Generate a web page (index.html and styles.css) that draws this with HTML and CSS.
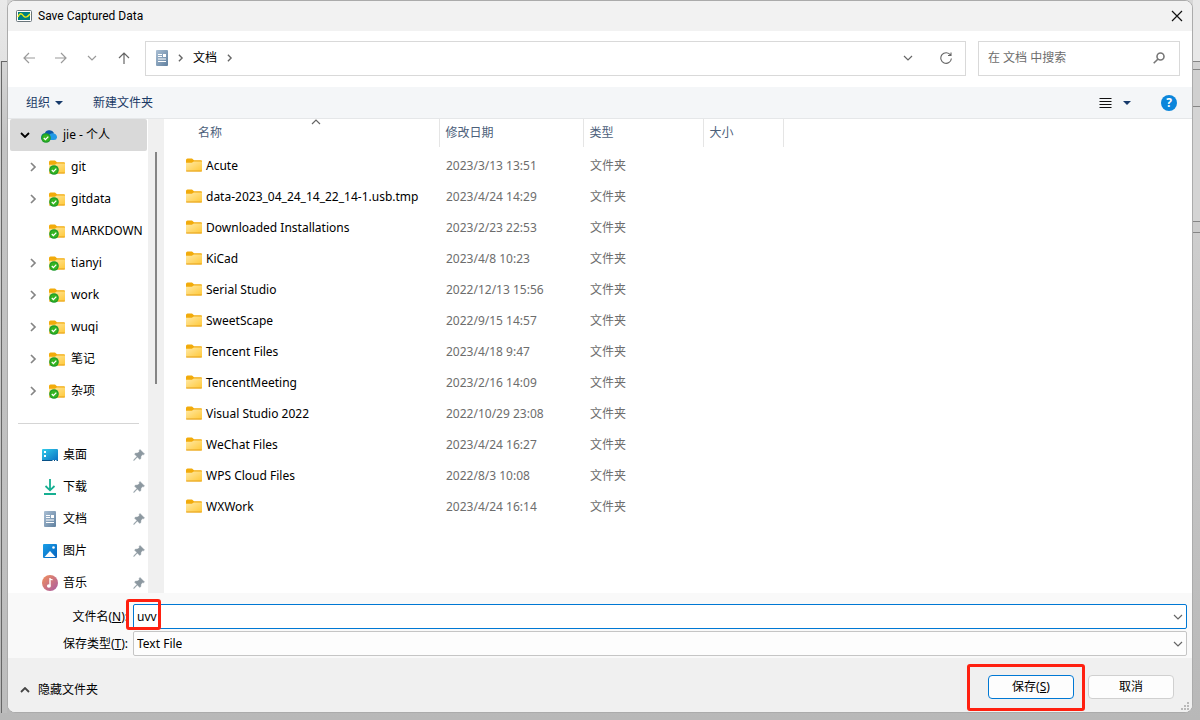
FILE: index.html
```html
<!DOCTYPE html>
<html lang="zh-CN">
<head>
<meta charset="utf-8">
<meta name="viewport" content="width=device-width, initial-scale=1">
<title>Save Captured Data</title>
<link rel="stylesheet" href="styles.css">
</head>
<body>
<svg class="defs" aria-hidden="true">
  <defs>
    <linearGradient id="gold" x1="0" y1="0" x2="1" y2="1"><stop offset="0" stop-color="#ffe9a6"/><stop offset="1" stop-color="#ffc837"/></linearGradient>
    <linearGradient id="slate" x1="0" y1="0" x2="1" y2="1"><stop offset="0" stop-color="#aabfd4"/><stop offset="1" stop-color="#60809f"/></linearGradient>
    <linearGradient id="azure" x1="0" y1="0" x2="1" y2="1"><stop offset="0" stop-color="#31cdea"/><stop offset="1" stop-color="#0b6fc2"/></linearGradient>
    <linearGradient id="blue" x1="0" y1="0" x2="1" y2="1"><stop offset="0" stop-color="#1aa0e8"/><stop offset="1" stop-color="#0762bd"/></linearGradient>
    <linearGradient id="coral" x1="0" y1="0" x2="1" y2="1"><stop offset="0" stop-color="#f2905b"/><stop offset="1" stop-color="#a85aa3"/></linearGradient>
    <symbol id="folder" viewBox="0 0 16 14">
      <path d="M0 2Q0 .5 1.5 .5H6L8 2.3H15Q16 2.3 16 3.5V6H0Z" fill="#f2ab0b"/>
      <path d="M0 4.8H5.8L7.8 3.5H16V12.5Q16 13.5 15 13.5H1Q0 13.5 0 12.5Z" fill="url(#gold)"/>
      <path d="M.2 13H15.8" stroke="#e5a01b"/>
    </symbol>
    <symbol id="check" viewBox="0 0 10 10">
      <circle cx="5" cy="5" r="4.8" fill="#1c9a2b"/><circle cx="5" cy="5" r="3.6" fill="#35b51f"/>
      <path d="M2.8 5L4.4 6.6L7.3 3.6" fill="none" stroke="#fff" stroke-width="1.3"/>
    </symbol>
    <symbol id="synced" viewBox="0 0 16 16">
      <use href="#folder" y="1" width="16" height="14"/><use href="#check" y="6" width="10" height="10"/>
    </symbol>
    <symbol id="cloud" viewBox="0 0 16 16">
      <path d="M3.5 8A5 5 0 0 1 13 6L9 11H2Z" fill="#0c59a8"/>
      <path d="M0 11Q0 6.3 4 6.2Q6 6.2 8 8L13 13H3Q0 13 0 11Z" fill="#1487d4"/>
      <path d="M7 13L6 10Q9 5.5 13 6.5Q16 7.5 16 10.4Q15.6 13 13 13Z" fill="#2299e6"/>
      <use href="#check" y="6" width="10" height="10"/>
    </symbol>
    <symbol id="document" viewBox="0 0 12 16">
      <rect width="12" height="16" rx="1" fill="url(#slate)"/>
      <path d="M2 4.5H6M2 6.5H6M2 9H10M2 11.5H10" stroke="#fff"/><path d="M7 4H10V7H7Z" fill="#fff"/>
    </symbol>
    <symbol id="desktop" viewBox="0 0 16 16">
      <rect y="2" width="16" height="12" rx="1" fill="url(#azure)"/><path d="M0 13.5H16" stroke="#075187"/>
      <path d="M2 4H4V6H2ZM2 8H4V10H2ZM10.5 13H12V14H10.5ZM13 13H14.500V14H13Z" fill="#fff"/>
    </symbol>
    <symbol id="download" viewBox="0 0 16 16">
      <path d="M8 0V11M3.500 7L8 11.300L12.500 7M2 15H14" fill="none" stroke="#16af92" stroke-width="1.8"/>
    </symbol>
    <symbol id="picture" viewBox="0 0 16 16">
      <rect x="1" y="1" width="14" height="14" rx="1" fill="url(#blue)"/><path d="M2.500 14L8 8L13.500 14Z" fill="#fff"/><circle cx="11.500" cy="4.500" r="1.300" fill="#fff"/>
    </symbol>
    <symbol id="music" viewBox="0 0 16 16">
      <circle cx="8" cy="8" r="8" fill="url(#coral)"/><path d="M8 3V10.500M8 3.600L10.500 5" stroke="#fff" stroke-width="1.400"/><ellipse cx="6.900" cy="11" rx="2" ry="1.800" fill="#fff"/>
    </symbol>
    <symbol id="pin" viewBox="0 0 12 12">
      <path d="M7 .500L11.500 5L10.300 5.800L9.500 5.600L8 7.300L7.700 9.800L6.700 10.300L4.300 8L1 11.500L.500 11L4 7.600L1.700 5.200L2.200 4.300L4.800 4L6.400 2.400L6.200 1.500Z" fill="#8c98a0" stroke="#8c98a0" stroke-width=".5"/>
    </symbol>
    <symbol id="right" viewBox="0 0 8 10"><path d="M2 1L6 5L2 9" fill="none" stroke="currentColor" stroke-width="1.700"/></symbol>
    <symbol id="down" viewBox="0 0 10 6"><path d="M1 1L5 5L9 1" fill="none" stroke="currentColor" stroke-width="1.200"/></symbol>
    <symbol id="down-bold" viewBox="0 0 10 6"><path d="M1 1L5 5L9 1" fill="none" stroke="currentColor" stroke-width="1.800"/></symbol>
    <symbol id="up" viewBox="0 0 10 6"><path d="M1 5L5 1L9 5" fill="none" stroke="currentColor" stroke-width="1.200"/></symbol>
    <symbol id="up-bold" viewBox="0 0 10 6"><path d="M1 5L5 1L9 5" fill="none" stroke="currentColor" stroke-width="1.800"/></symbol>
    <symbol id="caret" viewBox="0 0 8 4"><path d="M0 0H8L4 4Z" fill="#173a6b"/></symbol>
    <symbol id="arrow" viewBox="0 0 12 12"><path d="M12 6H1M6 1L1 6L6 11" fill="none" stroke="currentColor" stroke-width="1.200"/></symbol>
  </defs>
</svg>
<div class="desktop">
  <div class="gutter gutter-left"><div class="behind-left"></div></div>
  <main class="dialog">
    <header class="titlebar">
      <svg class="i16" viewBox="0 0 16 16"><rect x=".5" y="2.5" width="15" height="11" rx="1" fill="#fff" stroke="#69747a"/><rect x="2" y="4" width="12" height="8" fill="#007f80"/><path d="M2 9Q4.500 3 7.500 8Q10 11 14 6" fill="none" stroke="#f4ee12" stroke-width="1.300"/></svg>
      <h1>Save Captured Data</h1>
      <button class="icon-button close" aria-label="关闭"><svg viewBox="0 0 12 12" class="i12"><path d="M1 1L11 11M11 1L1 11" stroke="#111" stroke-width="1.200"/></svg></button>
    </header>
    <nav class="navbar">
      <div class="history">
        <button class="icon-button" aria-label="后退"><svg class="i12"><use href="#arrow"/></svg></button>
        <button class="icon-button" aria-label="前进"><svg class="i12 flip"><use href="#arrow"/></svg></button>
        <button class="icon-button" aria-label="最近位置"><svg class="chev"><use href="#down"/></svg></button>
        <button class="icon-button strong" aria-label="上移"><svg class="i12 turn"><use href="#arrow"/></svg></button>
      </div>
      <div class="address">
        <svg class="doc"><use href="#document"/></svg>
        <svg class="crumb"><use href="#right"/></svg>
        <a href="#docs">文档</a>
        <svg class="crumb"><use href="#right"/></svg>
        <button class="icon-button address-drop" aria-label="以前的位置"><svg class="chev"><use href="#down"/></svg></button>
        <button class="icon-button" aria-label="刷新"><svg class="i12" viewBox="0 0 12 12"><path d="M10.500 3A5.300 5.300 0 1 0 11.400 6.500M11 .500V3.500H8" fill="none" stroke="currentColor" stroke-width="1.100"/></svg></button>
      </div>
      <label class="search">
        <input type="text" placeholder="在 文档 中搜索" aria-label="在 文档 中搜索">
        <svg class="i12" viewBox="0 0 12 12"><circle cx="7.500" cy="4.500" r="3.500" fill="none" stroke="#777" stroke-width="1.600"/><path d="M5 7L.700 11.300" stroke="#777" stroke-width="1.600"/></svg>
      </label>
    </nav>
    <div class="toolbar">
      <button class="tool">组织 <svg class="caret"><use href="#caret"/></svg></button>
      <button class="tool">新建文件夹</button>
      <button class="tool view" aria-label="更改视图"><svg class="lines" viewBox="0 0 12 12"><path d="M0 1.500H12M0 4.500H12M0 7.500H12M0 10.500H12" stroke="#111"/></svg><svg class="caret"><use href="#caret"/></svg></button>
      <button class="help" aria-label="帮助">?</button>
    </div>
    <div class="browser">
      <aside class="sidebar">
        <ul class="tree">
          <li class="root"><svg class="chev"><use href="#down-bold"/></svg><svg class="i16"><use href="#cloud"/></svg><span>jie - 个人</span></li>
          <li><svg class="crumb"><use href="#right"/></svg><svg class="i16"><use href="#synced"/></svg><span>git</span></li>
          <li><svg class="crumb"><use href="#right"/></svg><svg class="i16"><use href="#synced"/></svg><span>gitdata</span></li>
          <li><svg class="crumb"></svg><svg class="i16"><use href="#synced"/></svg><span>MARKDOWN</span></li>
          <li><svg class="crumb"><use href="#right"/></svg><svg class="i16"><use href="#synced"/></svg><span>tianyi</span></li>
          <li><svg class="crumb"><use href="#right"/></svg><svg class="i16"><use href="#synced"/></svg><span>work</span></li>
          <li><svg class="crumb"><use href="#right"/></svg><svg class="i16"><use href="#synced"/></svg><span>wuqi</span></li>
          <li><svg class="crumb"><use href="#right"/></svg><svg class="i16"><use href="#synced"/></svg><span>笔记</span></li>
          <li><svg class="crumb"><use href="#right"/></svg><svg class="i16"><use href="#synced"/></svg><span>杂项</span></li>
        </ul>
        <hr>
        <ul class="quick">
          <li><svg class="i16"><use href="#desktop"/></svg><span>桌面</span><svg class="i12"><use href="#pin"/></svg></li>
          <li><svg class="i16"><use href="#download"/></svg><span>下载</span><svg class="i12"><use href="#pin"/></svg></li>
          <li><svg class="i16"><use href="#document"/></svg><span>文档</span><svg class="i12"><use href="#pin"/></svg></li>
          <li><svg class="i16"><use href="#picture"/></svg><span>图片</span><svg class="i12"><use href="#pin"/></svg></li>
          <li><svg class="i16"><use href="#music"/></svg><span>音乐</span><svg class="i12"><use href="#pin"/></svg></li>
        </ul>
      </aside>
      <div class="scrollbar"><div class="thumb"></div></div>
      <section class="files">
        <table>
          <colgroup><col class="c-name"><col class="c-date"><col class="c-type"><col class="c-size"><col></colgroup>
          <thead><tr><th>名称<svg class="chev sort"><use href="#up"/></svg></th><th>修改日期</th><th>类型</th><th>大小</th><th></th></tr></thead>
          <tbody>
            <tr><td><svg class="folder"><use href="#folder"/></svg>Acute</td><td>2023/3/13 13:51</td><td>文件夹</td><td></td><td></td></tr>
            <tr><td><svg class="folder"><use href="#folder"/></svg>data-2023_04_24_14_22_14-1.usb.tmp</td><td>2023/4/24 14:29</td><td>文件夹</td><td></td><td></td></tr>
            <tr><td><svg class="folder"><use href="#folder"/></svg>Downloaded Installations</td><td>2023/2/23 22:53</td><td>文件夹</td><td></td><td></td></tr>
            <tr><td><svg class="folder"><use href="#folder"/></svg>KiCad</td><td>2023/4/8 10:23</td><td>文件夹</td><td></td><td></td></tr>
            <tr><td><svg class="folder"><use href="#folder"/></svg>Serial Studio</td><td>2022/12/13 15:56</td><td>文件夹</td><td></td><td></td></tr>
            <tr><td><svg class="folder"><use href="#folder"/></svg>SweetScape</td><td>2022/9/15 14:57</td><td>文件夹</td><td></td><td></td></tr>
            <tr><td><svg class="folder"><use href="#folder"/></svg>Tencent Files</td><td>2023/4/18 9:47</td><td>文件夹</td><td></td><td></td></tr>
            <tr><td><svg class="folder"><use href="#folder"/></svg>TencentMeeting</td><td>2023/2/16 14:09</td><td>文件夹</td><td></td><td></td></tr>
            <tr><td><svg class="folder"><use href="#folder"/></svg>Visual Studio 2022</td><td>2022/10/29 23:08</td><td>文件夹</td><td></td><td></td></tr>
            <tr><td><svg class="folder"><use href="#folder"/></svg>WeChat Files</td><td>2023/4/24 16:27</td><td>文件夹</td><td></td><td></td></tr>
            <tr><td><svg class="folder"><use href="#folder"/></svg>WPS Cloud Files</td><td>2022/8/3 10:08</td><td>文件夹</td><td></td><td></td></tr>
            <tr><td><svg class="folder"><use href="#folder"/></svg>WXWork</td><td>2023/4/24 16:14</td><td>文件夹</td><td></td><td></td></tr>
          </tbody>
        </table>
      </section>
    </div>
    <div class="fields">
      <label for="filename">文件名(<u>N</u>):</label>
      <div class="combo active"><input id="filename" type="text" value="uvv"><svg class="chev"><use href="#down"/></svg><span class="mark mark-name"></span></div>
      <label for="filetype">保存类型(<u>T</u>):</label>
      <div class="combo"><select id="filetype"><option>Text File</option></select><svg class="chev"><use href="#down"/></svg></div>
    </div>
    <footer class="footer">
      <button class="toggle"><svg class="chev"><use href="#up-bold"/></svg>隐藏文件夹</button>
      <div class="save-wrap"><button class="btn primary">保存(<u>S</u>)</button><span class="mark mark-save"></span></div>
      <button class="btn">取消</button>
      <svg class="grip" viewBox="0 0 8 8"><path d="M6 0H8V2H6ZM3 3H5V5H3ZM6 3H8V5H6ZM0 6H2V8H0ZM3 6H5V8H3ZM6 6H8V8H6Z" fill="#b9b9b9"/></svg>
    </footer>
  </main>
  <div class="gutter gutter-right"><div class="strip-a"></div><div class="strip-b"></div><div class="strip-c"></div><div class="strip-d"></div><div class="strip-e"></div></div>
</div>
</body>
</html>
```
FILE: styles.css
```css
* { box-sizing: border-box; }
body {
  margin: 0;
  font: 12px/16px "Noto Sans", "Noto Sans CJK SC", sans-serif;
  color: #000;
}
button, input, select { font: inherit; color: inherit; }
ul { list-style: none; margin: 0; padding: 0; }
svg { display: block; flex: none; }
.defs { position: absolute; width: 0; height: 0; }
.i16 { width: 16px; height: 16px; }
.i12 { width: 12px; height: 12px; }
.chev { width: 10px; height: 6px; }
.crumb { width: 8px; height: 10px; color: #858585; }
.caret { width: 8px; height: 4px; }
.doc { width: 12px; height: 16px; }
.flip { transform: rotate(180deg); }
.turn { transform: rotate(90deg); }

.desktop {
  display: grid;
  grid-template-columns: 7px minmax(0, 1fr) 7px;
  min-height: 100vh;
  padding-bottom: 7px;
  background: linear-gradient(#d8d8d8, #b8b8b8);
}
.gutter { display: flex; flex-direction: column; }
.gutter-left { padding-top: 61px; background: linear-gradient(#e9e9e9 0, #e2e2e2 61px, transparent 61px); }
.behind-left {
  flex: 1;
  margin-left: 1px;
  border-top: 1px solid #666;
  border-left: 1px solid #666;
  background: linear-gradient(#d5d5d5, #c4c4c4 80px, #bdbdbd);
}
.gutter-right > div { border-bottom: 1px solid #858585; }
.strip-a { height: 62px; background: #e8e8e8; }
.strip-b { height: 8px; background: #d2d2d2; }
.strip-c { height: 37px; background: #d0d0d0; }
.strip-d { height: 115px; background: #d4d4d4; }
.strip-e { height: 11px; background: #ccc; }

.dialog {
  display: flex;
  flex-direction: column;
  border: 1px solid #ababab;
  border-radius: 8px;
  overflow: hidden;
  background: #fff;
}
.icon-button {
  display: grid;
  place-items: center;
  width: 24px;
  height: 24px;
  padding: 0;
  border: 0;
  background: none;
}
.titlebar {
  display: flex;
  align-items: center;
  gap: 6px;
  height: 30px;
  padding: 0 3px 0 8px;
  background: #f2f2f2;
}
.titlebar h1 { margin: 0; font-family: Roboto, sans-serif; font-size: 12px; font-weight: 400; }
.close { margin-left: auto; }

.navbar {
  display: grid;
  grid-template-columns: 125px minmax(0, 65fr) minmax(0, 16fr);
  gap: 12px;
  align-items: center;
  height: 56px;
  padding: 0 12px 2px 0;
}
.history { display: flex; justify-content: space-between; padding-left: 9px; padding-right: 0; color: #9a9a9a; }
.history .strong { color: #666; }
.history { margin-right: -3px; }
.address, .search {
  display: flex;
  align-items: center;
  height: 35px;
  border: 1px solid #d9d9d9;
}
.address { gap: 9px; padding: 0 7px 0 10px; color: #666; }
.address .crumb { width: 7px; height: 8px; color: #666; }
.address a { color: #000; text-decoration: none; }
.address-drop { margin-left: auto; margin-right: 5px; }
.search { padding: 0 14px 0 9px; }
.search input { flex: 1; min-width: 0; padding: 0; border: 0; outline: 0; background: none; }
.search input::placeholder { color: #6d6d6d; opacity: 1; }

.toolbar {
  display: flex;
  align-items: center;
  gap: 30px;
  height: 32px;
  padding: 0 15px 0 18px;
  border-bottom: 1px solid #e5e7e9;
  background: #f4f6f8;
  color: #1b3a66;
}
.tool { display: flex; align-items: center; gap: 5px; padding: 0; border: 0; background: none; }
.view { gap: 11px; margin-left: auto; }
.lines { width: 13px; height: 12px; }
.help {
  width: 16px;
  height: 16px;
  padding: 0;
  border: 0;
  border-radius: 50%;
  background: #0c86db;
  color: #fff;
  font-weight: 700;
}

.browser {
  display: grid;
  grid-template-columns: 140px 16px minmax(0, 1fr);
  flex: 1 0 474px;
  height: 474px;
  overflow: hidden;
}
.sidebar { min-height: 0; overflow: hidden; }
.sidebar li { display: flex; align-items: center; height: 32px; white-space: nowrap; }
.tree li { gap: 5px; padding-left: 21px; }
.tree .crumb { margin-right: 7px; }
.tree .i16 { margin-right: 1px; }
.tree .root { gap: 5px; margin: 0 1px 0 2px; padding-left: 10px; border-radius: 2px; background: #d9d9d9; }
.root .chev { margin-right: 6px; }
.sidebar hr { margin: 16px 9px 15px 10px; border: 0; border-top: 1px solid #d5d5d5; }
.quick li { gap: 5px; padding: 0 3px 0 34px; }
.quick .i12 { margin-left: auto; }
.scrollbar { padding: 33px 7px 0; background: #f0f0f0; }
.thumb { height: 232px; background: #858585; }

.files { overflow: auto; }
.files table { width: 100%; border-collapse: collapse; table-layout: fixed; }
.c-name { width: 275px; }
.c-date { width: 144px; }
.c-type { width: 120px; }
.c-size { width: 80px; }
.files th {
  position: relative;
  height: 28px;
  padding: 0 6px;
  border-right: 1px solid #e5e5e5;
  font-weight: 400;
  text-align: left;
  color: #4c607a;
}
.files th:first-child { padding-left: 34px; }
.files th:last-child { border: 0; }
.sort { position: absolute; left: 147px; top: 0; color: #666; }
.files tbody::before { content: ""; display: block; height: 3px; }
.files td { height: 31px; padding: 0 7px; color: #6d6d6d; white-space: nowrap; }
.files td:first-child { padding-left: 22px; color: #000; }
.folder { display: inline-block; width: 16px; height: 14px; margin-right: 4px; vertical-align: -2px; }

.fields {
  display: grid;
  grid-template-columns: 120px minmax(0, 1fr);
  gap: 2px 5px;
  align-items: center;
  padding: 11px 5px 2px 0;
  background: #f9f9f9;
}
.fields label { text-align: right; }
.combo {
  position: relative;
  display: flex;
  align-items: center;
  height: 25px;
  padding: 0 3px;
  border: 1px solid #c5c5c5;
  border-radius: 2px;
  background: #fdfdfd;
  color: #666;
}
.combo.active { border-color: #0078d4; background: #fff; }
.combo input, .combo select {
  flex: 1;
  min-width: 0;
  padding: 0;
  border: 0;
  outline: 0;
  appearance: none;
  background: none;
  color: #000;
}
.mark { position: absolute; border: 3px solid #ff2010; border-radius: 3px; pointer-events: none; }
.mark-name { left: -8px; top: -6px; width: 35px; height: 31px; }

.footer {
  position: relative;
  display: flex;
  align-items: center;
  gap: 14px;
  height: 54px;
  padding: 4px 18px 0 12px;
  background: #f0f0f0;
}
.toggle { display: flex; align-items: center; gap: 8px; margin-right: auto; padding: 6px 0 0; border: 0; background: none; }
.toggle .chev { color: #444; }
.save-wrap { position: relative; }
.btn { display: block; width: 86px; height: 24px; padding: 0; border: 1px solid #d0d0d0; border-radius: 4px; background: #fdfdfd; }
.primary { border-color: #0078d4; }
.mark-save { left: -21px; top: -11px; width: 118px; height: 47px; }
.grip { position: absolute; right: 3px; bottom: 2px; width: 8px; height: 8px; }
```
